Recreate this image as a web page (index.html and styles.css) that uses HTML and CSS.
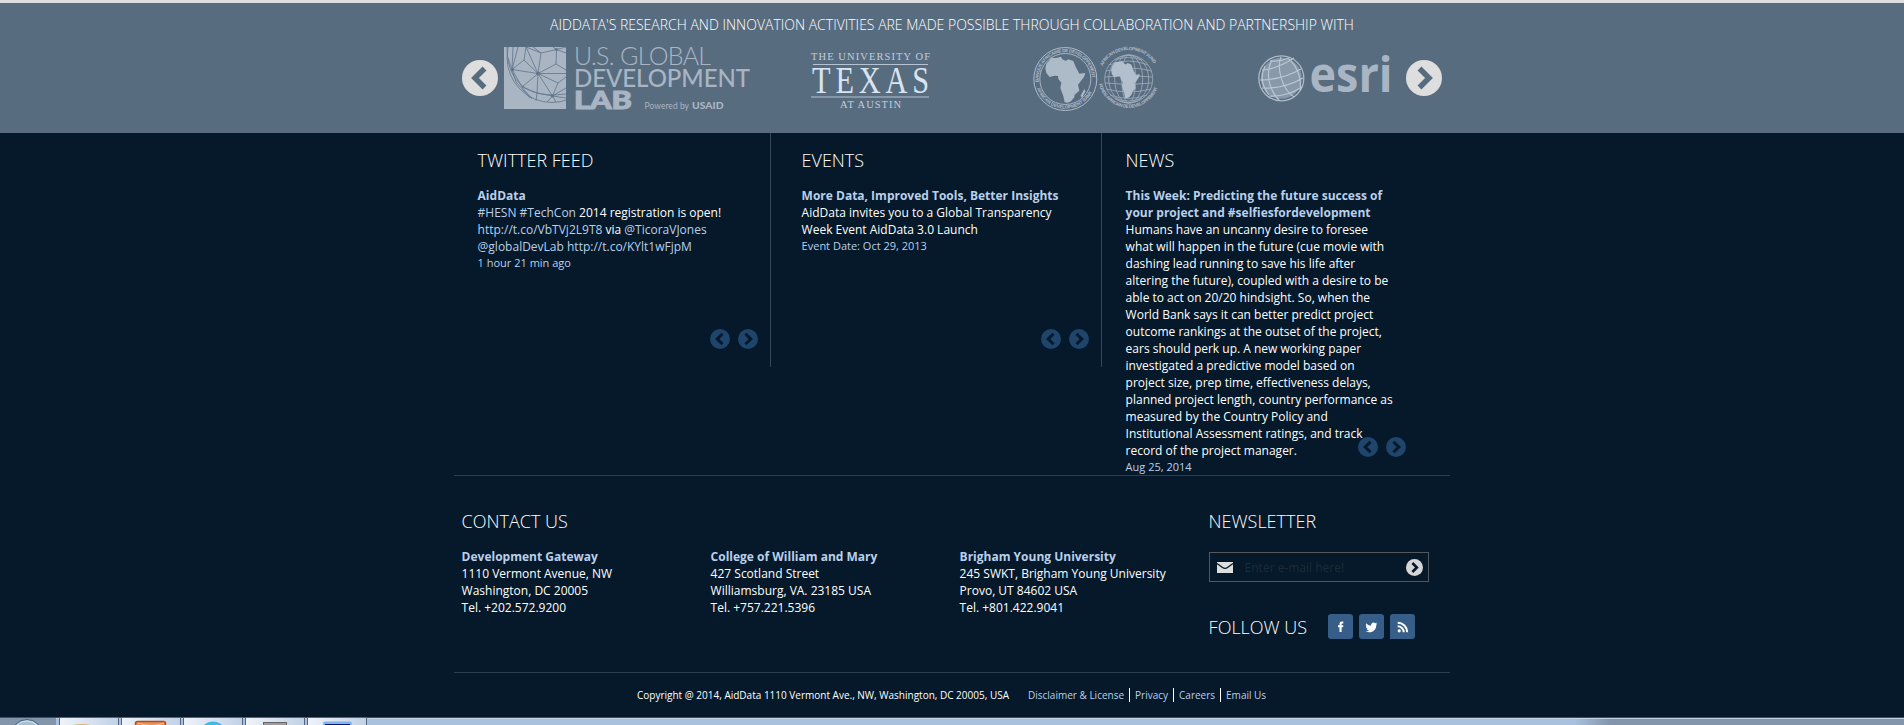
FILE: index.html
```html
<!DOCTYPE html>
<html lang="en">
<head>
<meta charset="utf-8">
<title>AidData</title>
<link rel="stylesheet" href="styles.css">
</head>
<body>
<svg class="defs" width="0" height="0" aria-hidden="true">
  <symbol id="left" viewBox="0 0 36 36"><circle cx="18" cy="18" r="18" fill="currentColor"/><path class="chev" d="M22.5 8.5 13 18l9.5 9.5"/></symbol>
  <symbol id="right" viewBox="0 0 36 36"><circle cx="18" cy="18" r="18" fill="currentColor"/><path class="chev" d="M13.500 8.500 23 18l-9.500 9.500"/></symbol>
  <path id="africa" d="M286 205 289 191 299 180 303 174 318 174 333 170 337 178 348 183 354 178 370 183 377 200 388 221 406 219 402 231 384 254 388 272 374 284 373 292 363 304 352 308 344 307 340 288 331 264 334 248 325 237 324 228 314 227 299 231 289 219Z"/>
</svg>

<section class="partners">
  <h1 class="partners-title">AIDDATA'S RESEARCH AND INNOVATION ACTIVITIES ARE MADE POSSIBLE THROUGH COLLABORATION AND PARTNERSHIP WITH</h1>
  <div class="logos">
    <svg class="big-arrow"><use href="#left"/></svg>
    <svg class="logo-lab" viewBox="504 43 246 70">
      <rect x="504" y="47" width="62" height="62" fill="#a9b5c3"/>
      <clipPath id="sq"><path d="M504 47h62v62h-62z"/></clipPath>
      <g clip-path="url(#sq)" fill="none" stroke="#62758a" stroke-width=".8">
        <circle cx="552" cy="57.500" r="45"/><path d="M507 47c0 35 20 52 59 47"/>
        <path d="M538 73.500 526 47M538 73.500 541 53M538 73.500 556 64M538 73.500h28M538 73.500 558 83M538 73.500 552.500 96M538 73.500 537 93M538 73.500 522 87M538 73.500 512 69.500M538 73.500 524 60"/>
        <path d="M541 53 556.500 49.500 556 64 566 70M556.500 49.500 566 53M556.500 49.500 553 47M556.500 49.500 566 47M541 53 533 47M541 53 526 47M524 60 526 47M524 60 512 69.500 513 47M512 69.500 508 58M512 69.500 522 87 537 93 552.500 96 558 83 566 77M552.500 96 566 88M552.500 96 566 98M552.500 96 547 102M552.500 96 556 102M512 69.500 516 82 530 98M512 69.500 518 47M522 87 532 99M537 93 536 101"/>
      </g>
      <circle cx="538" cy="73.500" r="2" fill="#62758a"/><circle cx="512.500" cy="69.500" r="1.600" fill="#62758a"/><circle cx="556.500" cy="49.500" r="1.600" fill="#62758a"/><circle cx="552.500" cy="96" r="1.600" fill="#62758a"/>
      <g class="lab-text">
        <text class="thin" x="574" y="65" textLength="137">U.S. GLOBAL</text>
        <text class="medium" x="574" y="87" textLength="176">DEVELOPMENT</text>
        <text class="heavy" x="574" y="109" textLength="58" lengthAdjust="spacingAndGlyphs">LAB</text>
        <text class="tiny" x="644.500" y="109" textLength="44.500">Powered by</text>
        <text class="tiny tiny-bold" x="692" y="109" textLength="31.500" lengthAdjust="spacingAndGlyphs">USAID</text>
      </g>
    </svg>
    <svg class="logo-texas" viewBox="809 43 124 70">
      <text class="ut-small" x="811" y="60" textLength="119">THE UNIVERSITY OF</text>
      <path d="M813 64.500h115M811 97h118" stroke="#b4c2d2" stroke-width="1"/>
      <text class="ut-big" transform="translate(812 92.500) scale(.82 1)" textLength="143">TEXAS</text>
      <text class="ut-small" x="840" y="108" textLength="61">AT AUSTIN</text>
    </svg>
    <svg class="logo-adb" viewBox="1031 43 128 70">
      <g fill="none" stroke="#adbac8"><circle cx="1065.300" cy="79" r="31.500"/><circle cx="1065.300" cy="79" r="25.500" stroke-width=".9"/></g>
      <g transform="translate(950 0) scale(.3333)" fill="#adbac8"><use href="#africa"/><path d="M392 287l11-20 3 7-10 20z"/></g>
      <path id="arc1" d="M1038.800 82a26.700 26.700 0 1 1 53 0" fill="none"/>
      <path id="arc2" d="M1037 88.500a30 30 0 0 0 56.600 0" fill="none"/>
      <path id="arc3" d="M1102.500 66a29.500 29.500 0 0 1 52.500 0" fill="none"/>
      <path id="arc4" d="M1099 84a30.500 30.500 0 0 0 59.500 0" fill="none"/>
      <g class="ring-text">
        <text><textPath href="#arc1" textLength="86">BANQUE AFRICAINE DE DEVELOPPEMENT</textPath></text>
        <text><textPath href="#arc2" textLength="70">AFRICAN DEVELOPMENT BANK</textPath></text>
        <text><textPath href="#arc3" textLength="62">AFRICAN DEVELOPMENT FUND</textPath></text>
        <text><textPath href="#arc4" textLength="78">FONDS AFRICAIN DE DEVELOPPEMENT</textPath></text>
      </g>
      <g fill="none" stroke="#9fadbd" stroke-width=".8"><circle cx="1128.700" cy="79" r="24"/><ellipse cx="1128.700" cy="79" rx="20" ry="24"/><ellipse cx="1128.700" cy="79" rx="14" ry="24"/><ellipse cx="1128.700" cy="79" rx="7" ry="24"/><path d="M1109 65q20-8 39 0M1106 71q23-6 46 0M1105 77q24-3 47 0M1105 83q24 3 47 0M1106 89q23 6 45 0M1110 95q19 7 37 0M1115 60q13-5 27 0M1115 98q13 6 27 0"/></g>
      <g transform="translate(1042.500 15) scale(.240 .270)" fill="#b3bfcd"><use href="#africa"/></g>
    </svg>
    <svg class="logo-esri" viewBox="1257 43 134 70">
      <circle cx="1281.300" cy="78.300" r="20.500" fill="#8799ab"/>
      <circle cx="1281.300" cy="78.300" r="22.500" fill="none" stroke="#adbac8" stroke-width="1.300"/>
      <g fill="none" stroke="#bac5d2" stroke-width="1.200"><path d="M1262 70q15-1 32-12M1260 80q22 0 41-11M1262 88q22 1 41-10M1269 96q18 1 33-9M1272 60c-7 13-3 30 7 40M1281 57c-5 12 2 33 13 40M1288 58c10 9 14 22 12 32M1265 66c-5 10-3 20 4 29M1270 61q10 1 19-3"/></g>
      <text class="esri" x="1309.500" y="91.500" textLength="83" lengthAdjust="spacingAndGlyphs">esri</text>
    </svg>
    <svg class="big-arrow"><use href="#right"/></svg>
  </div>
</section>

<main class="wrap">
  <section class="feeds">
    <article class="feed twitter">
      <h2>TWITTER FEED</h2>
      <strong>AidData</strong>
      <p><a>#HESN</a> <a>#TechCon</a> 2014 registration is open!<br><a>http://t.co/VbTVj2L9T8</a> via <a>@TicoraVJones</a><br><a>@globalDevLab</a> <a>http://t.co/KYlt1wFjpM</a></p>
      <small>1 hour 21 min ago</small>
      <div class="pager"><svg><use href="#left"/></svg><svg><use href="#right"/></svg></div>
    </article>
    <article class="feed events">
      <h2>EVENTS</h2>
      <strong>More Data, Improved Tools, Better Insights</strong>
      <p>AidData invites you to a Global Transparency<br>Week Event AidData 3.0 Launch</p>
      <small>Event Date: Oct 29, 2013</small>
      <div class="pager"><svg><use href="#left"/></svg><svg><use href="#right"/></svg></div>
    </article>
    <article class="feed news">
      <h2>NEWS</h2>
      <strong>This Week: Predicting the future success of<br>your project and #selfiesfordevelopment</strong>
      <p>Humans have an uncanny desire to foresee<br>what will happen in the future (cue movie with<br>dashing lead running to save his life after<br>altering the future), coupled with a desire to be<br>able to act on 20/20 hindsight. So, when the<br>World Bank says it can better predict project<br>outcome rankings at the outset of the project,<br>ears should perk up. A new working paper<br>investigated a predictive model based on<br>project size, prep time, effectiveness delays,<br>planned project length, country performance as<br>measured by the Country Policy and<br>Institutional Assessment ratings, and track<br>record of the project manager.</p>
      <small>Aug 25, 2014</small>
      <div class="pager"><svg><use href="#left"/></svg><svg><use href="#right"/></svg></div>
    </article>
  </section>

  <section class="contact">
    <div class="contact-us">
      <h2>CONTACT US</h2>
      <div class="offices">
        <div><strong>Development Gateway</strong><p>1110 Vermont Avenue, NW<br>Washington, DC 20005<br>Tel. +202.572.9200</p></div>
        <div><strong>College of William and Mary</strong><p>427 Scotland Street<br>Williamsburg, VA. 23185 USA<br>Tel. +757.221.5396</p></div>
        <div><strong>Brigham Young University</strong><p>245 SWKT, Brigham Young University<br>Provo, UT 84602 USA<br>Tel. +801.422.9041</p></div>
      </div>
    </div>
    <div class="side">
      <h2>NEWSLETTER</h2>
      <div class="email">
        <svg class="mail" viewBox="0 0 16 11"><path fill="#dedede" d="M0 0h16v11H0z"/><path d="M0 1.500 5.500 5.500Q8 7.300 10.500 5.500L16 1.500" fill="none" stroke="#05192a" stroke-width="1.300"/></svg>
        <span class="hint">Enter e-mail here!</span>
        <svg class="go"><use href="#right"/></svg>
      </div>
      <div class="follow">
        <h2>FOLLOW US</h2>
        <svg viewBox="0 0 25 25"><rect width="25" height="25" rx="3" fill="#365e88"/><path fill="#fff" d="M11.500 18v-4.800H10v-2h1.500V10c0-1.700 1-2.500 2.400-2.500h1.400v1.900h-.9c-.6 0-.8.3-.8.8v1h1.700l-.2 2h-1.500V18z"/></svg>
        <svg viewBox="0 0 25 25"><rect width="25" height="25" rx="3" fill="#365e88"/><path fill="#fff" d="M18.500 9.400l-1.200 1.300c.1 4.700-3.200 7.600-7 7.600-1.400 0-2.600-.4-3.600-1 1.300.1 2.400-.2 3.300-.9-1.100-.1-1.900-.8-2.200-1.700h1c-1.200-.4-1.900-1.300-1.900-2.500l1 .3c-1.100-.9-1.400-2-.7-3.300 1.300 1.500 2.900 2.300 4.900 2.400-.4-2.800 2.500-4.200 4.300-2.400l1.600-.6-1.100 1.400z"/></svg>
        <svg viewBox="0 0 25 25"><path d="M3 0h19a3 3 0 0 1 3 3v19a3 3 0 0 1-3 3H0V3a3 3 0 0 1 3-3z" fill="#365e88"/><circle cx="9.200" cy="16.800" r="1.600" fill="#fff"/><path d="M7.700 12.200a6 6 0 0 1 6 6M7.700 8.700a9.500 9.500 0 0 1 9.500 9.500" fill="none" stroke="#fff" stroke-width="2"/></svg>
      </div>
    </div>
  </section>

  <footer class="legal">
    <span class="copy">Copyright @ 2014, AidData 1110 Vermont Ave., NW, Washington, DC 20005, USA</span>
    <nav><a>Disclaimer &amp; License</a><a>Privacy</a><a>Careers</a><a>Email Us</a></nav>
  </footer>
</main>

<div class="taskbar">
  <div class="start"><svg viewBox="0 0 60 7"><circle cx="27" cy="17" r="15.500" fill="#a9bfd0" stroke="#3d6585"/><circle cx="27" cy="17" r="14" fill="none" stroke="#d5e3ee"/></svg></div>
  <div class="task"><svg viewBox="0 0 58 7"><ellipse cx="22" cy="8" rx="9" ry="2" fill="#d8b55c"/></svg></div>
  <div class="task"><svg viewBox="0 0 58 7"><rect x="13.500" y="3.500" width="30" height="8" rx="2" fill="#e8905a" stroke="#c04a10" stroke-width="1.500"/><path d="M16 5q13 5 26 0" stroke="#f5c09c" fill="none"/></svg></div>
  <div class="task"><svg viewBox="0 0 58 7"><ellipse cx="29" cy="10" rx="10" ry="6.500" fill="#42b8e8"/></svg></div>
  <div class="task"><svg viewBox="0 0 58 7"><rect x="17.500" y="4.500" width="23" height="6" fill="#a09c9c" stroke="#686468"/></svg></div>
  <div class="task"><svg viewBox="0 0 58 7"><rect x="15" y="3.500" width="29" height="6" rx="2" fill="#80b4f0"/><rect x="17" y="6" width="25" height="4" fill="#14186a"/></svg></div>
</div>
</body>
</html>
```
FILE: styles.css
```css
* { box-sizing: border-box; margin: 0; padding: 0; }
body {
  width: 1904px;
  height: 725px;
  overflow: hidden;
  background: #05192a;
  color: #fff;
  font: 12px/17px "Open Sans", sans-serif;
  white-space: nowrap;
}
svg { display: block; flex: none; }
.defs { position: absolute; }
.chev { fill: none; stroke: var(--cut); stroke-width: 5.5; }
h1, h2 { font-weight: 300; }
h2 { font-size: 18px; line-height: 24px; }
strong { display: block; font-weight: 700; color: #b9d0ea; }
a, small { color: #b9d0ea; }
small { display: block; font-size: 11px; line-height: 15px; }

/* Partner band */
.partners {
  height: 133px;
  border-top: 3px solid #dedede;
  background: #586c80;
  padding-top: 12px;
  --cut: #586c80;
}
.partners-title {
  font-size: 14px;
  line-height: 20px;
  font-weight: 300;
  text-align: center;
}
.logos {
  width: 980px;
  height: 70px;
  margin: 8px auto 0;
  display: flex;
  align-items: center;
}
.logos svg { height: 70px; overflow: visible; }
.logos .big-arrow { width: 36px; height: 36px; color: #dedede; }
.logo-lab { width: 246px; margin-left: 6px; }
.logo-texas { width: 124px; margin-left: 59px; }
.logo-adb { width: 128px; margin-left: 98px; }
.logo-esri { width: 134px; margin: 0 15px 0 98px; }
.lab-text { font-family: Lato, sans-serif; fill: #a9b5c3; }
.thin { font-size: 25px; font-weight: 300; }
.medium { font-size: 24px; font-weight: 500; }
.heavy { font-size: 24px; font-weight: 900; stroke: #a9b5c3; stroke-width: 1; }
.tiny { font-size: 8.5px; }
.tiny-bold { font-weight: 900; }
.ut-small { font: 10.5px "Liberation Serif", serif; fill: #c0cedd; }
.ut-big { font: 37px "Liberation Serif", serif; fill: #d9e4f0; }
.ring-text { font: 700 4.6px "Liberation Sans", sans-serif; fill: #adbac8; }
.esri { font: 700 49px "Open Sans", sans-serif; fill: #a9b5c3; }

/* Feeds */
.wrap { width: 996px; margin: 0 auto; height: 584px; --cut: #05192a; }
.feeds {
  display: grid;
  grid-template-columns: 317px 331px 348px;
  align-items: start;
  height: 343px;
  border-bottom: 1px solid #2c3f50;
}
.feed { position: relative; height: 234px; padding-top: 15px; border-right: 1px solid #35475a; }
.feed h2 { margin-bottom: 15px; }
.twitter { padding-left: 23.6px; }
.events { padding-left: 30.6px; }
.news { padding-left: 23.6px; height: 342px; border-right: 0; }
.pager { position: absolute; right: 12px; bottom: 18px; display: flex; gap: 8px; color: #1f456c; }
.pager svg { width: 20px; height: 20px; }
.news .pager { right: 44px; bottom: 18px; }

/* Contact */
.contact {
  display: grid;
  grid-template-columns: 747px 1fr;
  height: 197px;
  padding: 33px 0 0 7.6px;
  border-bottom: 1px solid #2c3f50;
}
.contact-us h2 { margin-bottom: 15px; }
.offices { display: grid; grid-template-columns: repeat(3, 249px); }
.email {
  display: flex;
  align-items: center;
  width: 220px;
  height: 30px;
  margin-top: 19px;
  padding: 0 5px 0 7px;
  border: 1px solid #54585c;
}
.mail { width: 16px; height: 11px; }
.hint { margin-left: 12px; color: #1c2b39; }
.go { width: 17px; height: 17px; margin-left: auto; color: #d6d6d6; }
.follow { display: flex; align-items: center; gap: 6px; margin-top: 32px; }
.follow h2 { width: 113px; }
.follow svg { width: 25px; height: 25px; }

/* Legal line */
.legal { display: flex; padding: 15px 0 0 183px; font-size: 10px; line-height: 14px; }
.copy { width: 391px; }
.legal nav { display: flex; }
.legal nav a { padding-right: 5px; }
.legal nav a + a { border-left: 1px solid #fff; padding-left: 5px; }

/* Taskbar */
.taskbar {
  display: flex;
  gap: 4px;
  height: 8px;
  border-top: 1px solid #3c5064;
  box-shadow: inset 0 1px #c3d2e2;
  background: linear-gradient(90deg, #a9c0de 1575px, #8295ab 1610px);
}
.start { width: 56px; background: #8295ab; }
.start svg { width: 60px; height: 7px; }
.task { width: 58px; background: linear-gradient(90deg, #eef3f9, #c2d1e7); outline: 1px solid #53657c; }
.task svg { width: 58px; height: 7px; }
```
